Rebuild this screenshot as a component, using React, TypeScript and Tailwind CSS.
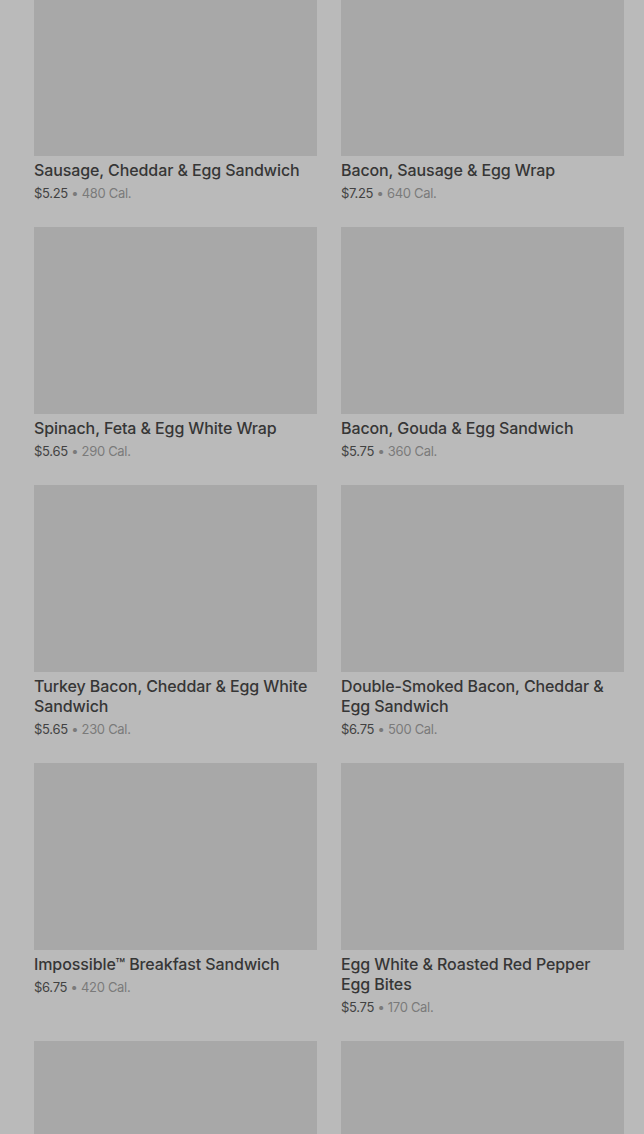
import React from "react";

const items = [
  { name: "Sausage, Cheddar & Egg Sandwich", price: "$5.25", cal: "480 Cal." },
  { name: "Bacon, Sausage & Egg Wrap", price: "$7.25", cal: "640 Cal." },
  { name: "Spinach, Feta & Egg White Wrap", price: "$5.65", cal: "290 Cal." },
  { name: "Bacon, Gouda & Egg Sandwich", price: "$5.75", cal: "360 Cal." },
  { name: "Turkey Bacon, Cheddar & Egg White Sandwich", price: "$5.65", cal: "230 Cal." },
  { name: "Double-Smoked Bacon, Cheddar & Egg Sandwich", price: "$6.75", cal: "500 Cal." },
  { name: "Impossible™ Breakfast Sandwich", price: "$6.75", cal: "420 Cal." },
  { name: "Egg White & Roasted Red Pepper Egg Bites", price: "$5.75", cal: "170 Cal." },
  { name: "", price: "", cal: "" },
  { name: "", price: "", cal: "" },
];

export default function App() {
  return (
    <div className="w-[644px] h-[1134px] overflow-hidden bg-[#bababa]" style={{ fontFamily: "Inter, 'Noto Sans', sans-serif" }}>
      <div className="grid grid-cols-2 gap-x-6 gap-y-6 pl-[34px] pr-[20px] mt-[-31px]">
        {items.map((it, i) => (
          <div key={i} className="flex flex-col">
            <div className="h-[187px] bg-[#a8a8a8]" />
            {it.name && (
              <>
                <div className="mt-1 pr-1 text-[16px] leading-[20px] font-medium tracking-[-0.1px] text-[#363636]">{it.name}</div>
                <div className="mt-1 text-[13px] leading-[19px] tracking-[-0.3px] text-[#7a7a7a]">
                  <span className="text-[#424242]">{it.price}</span> • {it.cal}
                </div>
              </>
            )}
          </div>
        ))}
      </div>
    </div>
  );
}
